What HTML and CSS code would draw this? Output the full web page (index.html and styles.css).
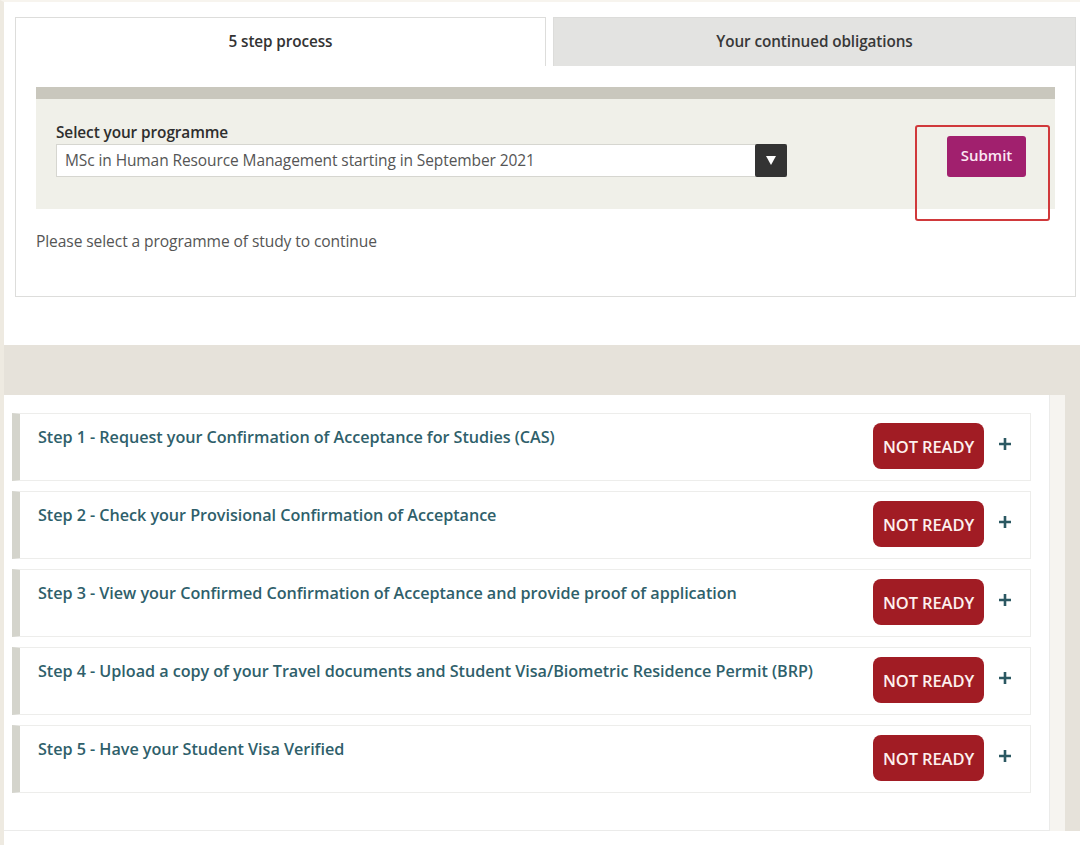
FILE: index.html
```html
<!DOCTYPE html>
<html lang="en">
<head>
<meta charset="utf-8">
<title>5 step process</title>
<link rel="stylesheet" href="styles.css">
</head>
<body>
<div class="page">
  <div class="top">
    <div class="tabs">
      <div class="tab tab-active">5 step process</div>
      <div class="tab tab-inactive">Your continued obligations</div>
    </div>
    <div class="panel">
      <div class="form">
        <div class="field">
          <label class="label">Select your programme</label>
          <div class="select">
            <span class="select-text">MSc in Human Resource Management starting in September 2021</span>
            <span class="select-arrow"><svg width="10" height="9" viewBox="0 0 10 9"><path d="M0 0H10L5 9Z" fill="#fff"/></svg></span>
          </div>
        </div>
        <div class="submit-wrap">
          <button class="submit">Submit</button>
          <div class="highlight"></div>
        </div>
      </div>
      <p class="hint">Please select a programme of study to continue</p>
    </div>
  </div>
  <div class="band"></div>
  <div class="lower">
    <div class="steps">
      <div class="step">
        <div class="step-title">Step 1 - Request your Confirmation of Acceptance for Studies (CAS)</div>
        <div class="step-side"><span class="badge">NOT READY</span><svg class="plus" width="12" height="12" viewBox="0 0 12 12"><path d="M6 0V12M0 6H12" stroke="#2b5862" stroke-width="2.6"/></svg></div>
      </div>
      <div class="step">
        <div class="step-title">Step 2 - Check your Provisional Confirmation of Acceptance</div>
        <div class="step-side"><span class="badge">NOT READY</span><svg class="plus" width="12" height="12" viewBox="0 0 12 12"><path d="M6 0V12M0 6H12" stroke="#2b5862" stroke-width="2.6"/></svg></div>
      </div>
      <div class="step">
        <div class="step-title">Step 3 - View your Confirmed Confirmation of Acceptance and provide proof of application</div>
        <div class="step-side"><span class="badge">NOT READY</span><svg class="plus" width="12" height="12" viewBox="0 0 12 12"><path d="M6 0V12M0 6H12" stroke="#2b5862" stroke-width="2.6"/></svg></div>
      </div>
      <div class="step">
        <div class="step-title">Step 4 - Upload a copy of your Travel documents and Student Visa/Biometric Residence Permit (BRP)</div>
        <div class="step-side"><span class="badge">NOT READY</span><svg class="plus" width="12" height="12" viewBox="0 0 12 12"><path d="M6 0V12M0 6H12" stroke="#2b5862" stroke-width="2.6"/></svg></div>
      </div>
      <div class="step">
        <div class="step-title">Step 5 - Have your Student Visa Verified</div>
        <div class="step-side"><span class="badge">NOT READY</span><svg class="plus" width="12" height="12" viewBox="0 0 12 12"><path d="M6 0V12M0 6H12" stroke="#2b5862" stroke-width="2.6"/></svg></div>
      </div>
    </div>
    <div class="lower-side"></div>
  </div>
  <div class="foot"></div>
</div>
</body>
</html>
```

FILE: styles.css
```css
* { box-sizing: border-box; }
html, body { margin: 0; padding: 0; }
body {
  font-family: "Open Sans", "Lato", sans-serif;
  background: #ffffff;
  color: #333;
  width: 1080px;
  height: 845px;
  overflow: hidden;
}
.page {
  border-left: 4px solid #eeeae1;
  border-top: 2px solid #f7f4ee;
  min-height: 845px;
}
.top {
  padding: 15px 4px 48px 11px;
  background: #fff;
}
.tabs {
  display: flex;
  gap: 7px;
  height: 49px;
}
.tab {
  display: flex;
  align-items: center;
  justify-content: center;
  font-weight: 600;
  font-size: 15.3px;
  color: #333;
  padding-bottom: 2px;
  letter-spacing: -0.1px;
}
.tab-active {
  width: 531px;
  background: #fff;
  border: 1px solid #dddddb;
  border-bottom: none;
}
.tab-inactive {
  flex: 1;
  background: #e3e3e1;
  border: 1px solid #dcdcda;
  border-bottom: none;
  color: #383838;
}
.panel {
  border: 1px solid #dddddb;
  border-top: none;
  padding: 21px 20px 0 20px;
  height: 231px;
}
.form {
  border-top: 12px solid #c9c7bd;
  background: #f0f0e9;
  height: 122px;
  display: flex;
  padding: 25px 0 0 20px;
}
.field {
  display: flex;
  flex-direction: column;
  width: 731px;
}
.label {
  font-weight: 600;
  font-size: 15.4px;
  color: #2e2e2e;
  line-height: 18px;
  margin-bottom: 2px;
  letter-spacing: -0.1px;
}
.select {
  display: flex;
  height: 33px;
  background: #fff;
  border: 1px solid #d6d6d0;
  border-right: none;
}
.select-text {
  flex: 1;
  padding-left: 8px;
  font-size: 15.5px;
  line-height: 31px;
  color: #555;
  letter-spacing: -0.1px;
}
.select-arrow {
  width: 32px;
  margin-top: -1px;
  height: 33px;
  background: #333;
  border-radius: 2px;
  display: flex;
  align-items: center;
  justify-content: center;
}
.submit-wrap {
  position: relative;
  margin-left: 160px;
  padding-top: 12px;
}
.submit {
  width: 79px;
  height: 41px;
  background: #a1206e;
  border: none;
  border-radius: 3px;
  color: #fbe8f3;
  font-family: "Open Sans", "Lato", sans-serif;
  font-weight: 600;
  font-size: 15px;
  padding: 0 0 3px 0;
}
.highlight {
  position: absolute;
  left: -32px;
  top: 1px;
  width: 135px;
  height: 96px;
  border: 2px solid #d0393b;
  border-radius: 3px;
  pointer-events: none;
}
.hint {
  margin: 22px 0 0 0;
  font-size: 15.6px;
  line-height: 20px;
  color: #555;
  letter-spacing: -0.1px;
}
.band {
  height: 50px;
  background: #e6e2da;
}
.lower {
  display: flex;
  background: #e6e2da;
}
.steps {
  width: 1046px;
  background: #fff;
  border-right: 1px solid #ebebea;
  border-bottom: 1px solid #ebebea;
  padding: 18px 18px 37px 8px;
  display: flex;
  flex-direction: column;
  gap: 10px;
}
.lower-side {
  width: 15px;
  background: #f6f4f0;
}
.step {
  height: 68px;
  display: flex;
  align-items: center;
  border: 1px solid #ededeb;
  border-left: 8px solid #d4d4cc;
  padding: 0 19px 0 18px;
}
.step-title {
  flex: 1;
  align-self: flex-start;
  padding-top: 13px;
  font-weight: 600;
  font-size: 16.2px;
  line-height: 20px;
  color: #2f5f6b;
  letter-spacing: -0.05px;
}
.step-side {
  display: flex;
  align-items: center;
  gap: 15px;
  margin-top: -2px;
}
.badge {
  width: 111px;
  height: 46px;
  border-radius: 8px;
  background: #a11c24;
  color: #fdf0ee;
  font-weight: 600;
  font-size: 16.5px;
  display: flex;
  align-items: center;
  justify-content: center;
  letter-spacing: -0.1px;
}
.plus { display: block; margin-top: -4px; }
.foot {
  height: 20px;
  background: #fff;
}
```
